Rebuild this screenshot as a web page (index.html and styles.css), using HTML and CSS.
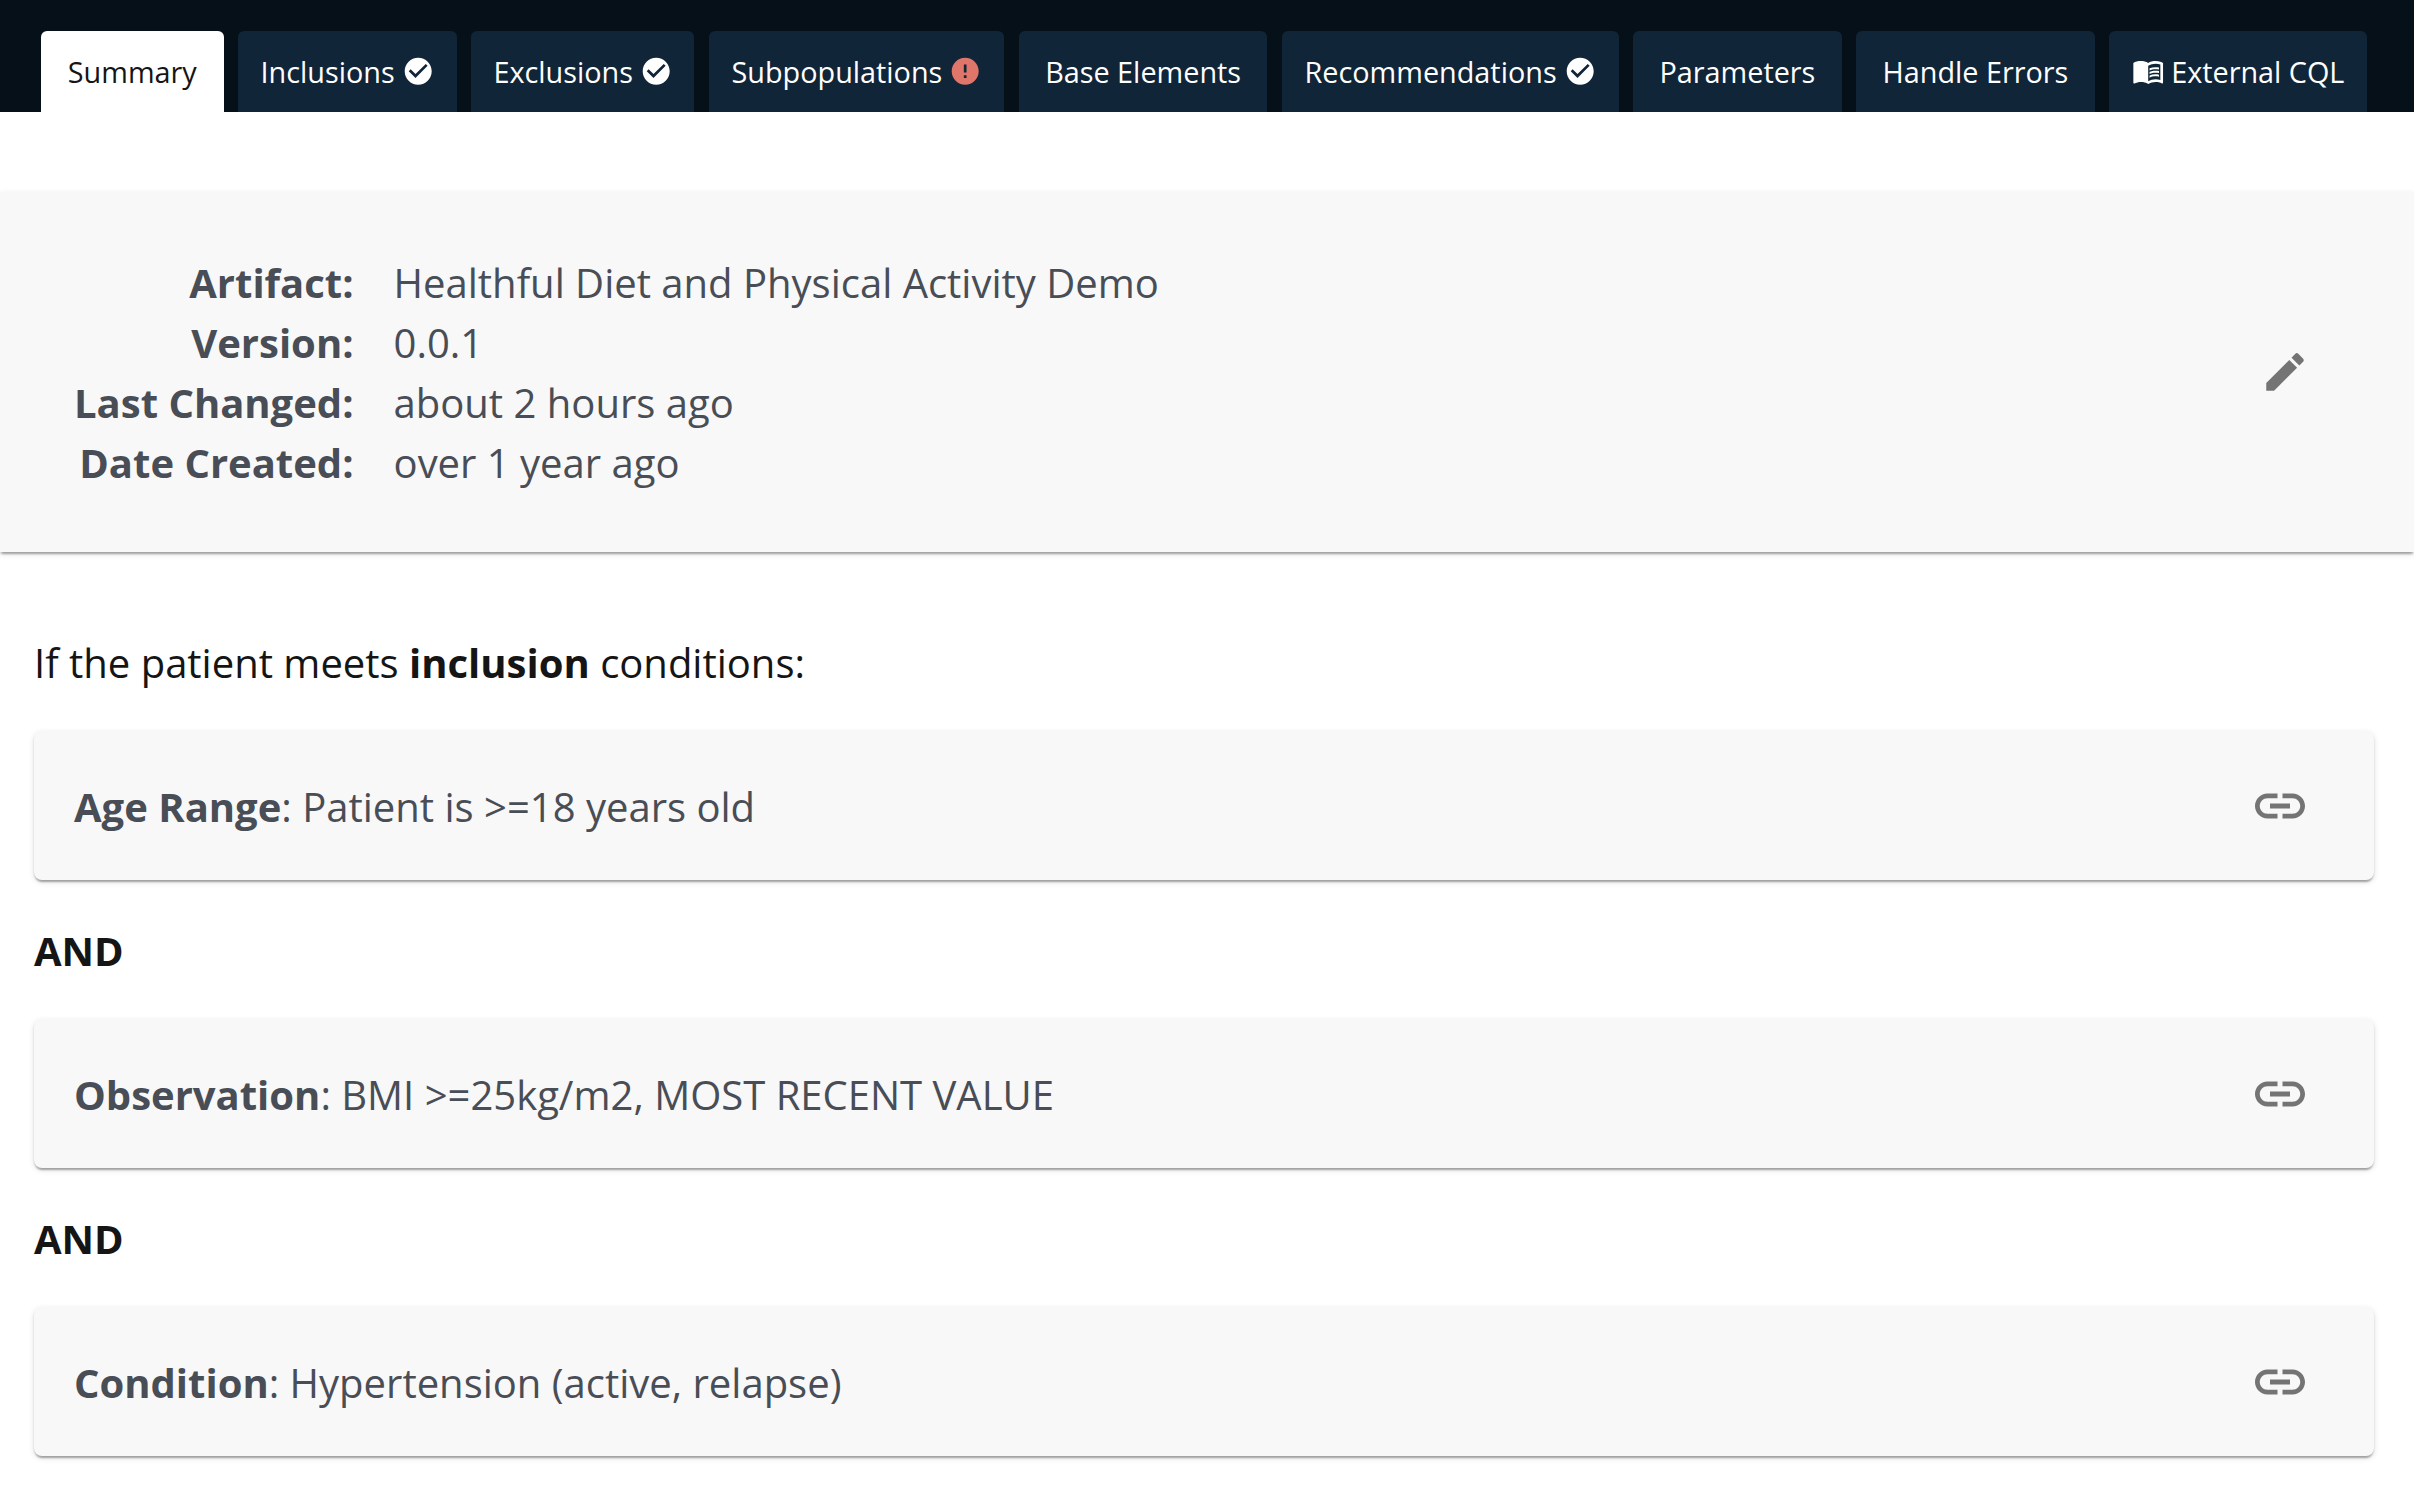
FILE: index.html
```html
<!DOCTYPE html>
<html lang="en">
<head>
<meta charset="utf-8">
<title>Artifact Summary</title>
<link rel="stylesheet" href="styles.css">
</head>
<body>
<svg class="sprite" aria-hidden="true">
  <symbol id="check" viewBox="0 0 24 24"><path d="M12 2C6.48 2 2 6.48 2 12s4.48 10 10 10 10-4.48 10-10S17.52 2 12 2zm-2 15l-5-5 1.41-1.41L10 14.17l7.59-7.59L19 8l-9 9z"/></symbol>
  <symbol id="error" viewBox="0 0 24 24"><path d="M12 2C6.48 2 2 6.48 2 12s4.48 10 10 10 10-4.48 10-10S17.52 2 12 2zm1 15h-2v-2h2v2zm0-4h-2V7h2v6z"/></symbol>
  <symbol id="book" viewBox="0 0 24 24"><path d="M21 5c-1.11-.35-2.33-.5-3.5-.5-1.95 0-4.05.4-5.5 1.5-1.45-1.1-3.55-1.5-5.5-1.5S2.45 4.9 1 6v14.65c0 .25.25.5.5.5.1 0 .15-.05.25-.05C3.1 20.45 5.05 20 6.5 20c1.95 0 4.05.4 5.5 1.5 1.35-.85 3.8-1.5 5.5-1.5 1.65 0 3.35.3 4.75 1.05.1.05.15.05.25.05.25 0 .5-.25.5-.5V6c-.6-.45-1.25-.75-2-1zm0 13.5c-1.1-.35-2.3-.5-3.5-.5-1.7 0-4.15.65-5.5 1.5V8c1.35-.85 3.8-1.5 5.5-1.5 1.2 0 2.4.15 3.5.5v11.5z"/><path d="M17.5 10.5c.88 0 1.73.09 2.5.26V9.24c-.79-.15-1.64-.24-2.5-.24-1.7 0-3.24.29-4.5.83v1.66c1.13-.64 2.7-.99 4.5-.99zM13 12.49v1.66c1.13-.64 2.7-.99 4.5-.99.88 0 1.73.09 2.5.26V11.9c-.79-.15-1.64-.24-2.5-.24-1.7 0-3.24.3-4.5.83zM17.5 14.33c-1.7 0-3.24.29-4.5.83v1.66c1.13-.64 2.7-.99 4.5-.99.88 0 1.73.09 2.5.26v-1.52c-.79-.16-1.64-.24-2.5-.24z"/></symbol>
  <symbol id="edit" viewBox="0 0 24 24"><path d="M3 17.25V21h3.75L17.81 9.94l-3.75-3.75L3 17.25zM20.71 7.04c.39-.39.39-1.02 0-1.41l-2.34-2.34a.9959.9959 0 0 0-1.41 0l-1.83 1.83 3.75 3.75 1.83-1.83z"/></symbol>
  <symbol id="link" viewBox="0 0 24 24"><path d="M3.9 12c0-1.71 1.39-3.1 3.1-3.1h4V7H7c-2.76 0-5 2.24-5 5s2.24 5 5 5h4v-1.9H7c-1.71 0-3.1-1.39-3.1-3.1zM8 13h8v-2H8v2zm9-6h-4v1.9h4c1.71 0 3.1 1.39 3.1 3.1s-1.39 3.1-3.1 3.1h-4V17h4c2.76 0 5-2.24 5-5s-2.24-5-5-5z"/></symbol>
</svg>
<nav class="tabs">
  <a class="tab w1 active">Summary</a>
  <a class="tab w2">Inclusions<svg class="status"><use href="#check"/></svg></a>
  <a class="tab w3">Exclusions<svg class="status"><use href="#check"/></svg></a>
  <a class="tab w4">Subpopulations<svg class="status alert"><use href="#error"/></svg></a>
  <a class="tab w5">Base Elements</a>
  <a class="tab w6">Recommendations<svg class="status"><use href="#check"/></svg></a>
  <a class="tab w7">Parameters</a>
  <a class="tab w8">Handle Errors</a>
  <a class="tab w9"><svg class="lead"><use href="#book"/></svg>External CQL</a>
</nav>
<header class="details">
  <dl class="meta">
    <dt>Artifact:</dt><dd>Healthful Diet and Physical Activity Demo</dd>
    <dt>Version:</dt><dd>0.0.1</dd>
    <dt>Last Changed:</dt><dd>about 2 hours ago</dd>
    <dt>Date Created:</dt><dd>over 1 year ago</dd>
  </dl>
  <svg class="edit"><use href="#edit"/></svg>
</header>
<main class="summary">
  <p class="line">If the patient meets <b>inclusion</b> conditions:</p>
  <section class="card"><p><b>Age Range</b>: Patient is &gt;=18 years old</p><svg class="link"><use href="#link"/></svg></section>
  <p class="line"><b>AND</b></p>
  <section class="card"><p><b>Observation</b>: BMI &gt;=25kg/m2, MOST RECENT VALUE</p><svg class="link"><use href="#link"/></svg></section>
  <p class="line"><b>AND</b></p>
  <section class="card"><p><b>Condition</b>: Hypertension (active, relapse)</p><svg class="link"><use href="#link"/></svg></section>
</main>
</body>
</html>
```
FILE: styles.css
```css
* { box-sizing: border-box; }
body {
  margin: 0;
  background: #fff;
  color: #151515;
  font: 40px/60px "Open Sans", sans-serif;
}
p, dl, dd { margin: 0; }
b, dt { font-weight: 700; }
svg { display: block; flex: none; fill: currentColor; }
.sprite { display: none; }

.tabs {
  display: flex;
  align-items: flex-end;
  gap: 14.4px;
  height: 112px;
  padding-left: 41px;
  background: #061018;
}
.tab {
  display: flex;
  align-items: center;
  justify-content: center;
  height: 81px;
  border-radius: 6px 6px 0 0;
  background: #112538;
  color: #fff;
  font-size: 28.8px;
  line-height: 40px;
  white-space: nowrap;
}
.tab.active { background: #fff; color: #151515; }
.w1 { width: 182.5px; }
.w2 { width: 218.9px; }
.w3 { width: 223.3px; }
.w4 { width: 295.5px; }
.w5 { width: 248.7px; }
.w6 { width: 336.9px; }
.w7 { width: 208.6px; }
.w8 { width: 238.6px; }
.w9 { width: 258px; }
.status { width: 32.4px; height: 32.4px; margin-left: 7px; }
.alert { color: #e0756a; }
.lead { width: 32.4px; height: 32.4px; margin-right: 7px; }

.details, .card {
  display: flex;
  align-items: center;
  justify-content: space-between;
  background: #f8f8f8;
  color: #484d56;
  box-shadow: 0 4px 2px -2px rgba(0, 0, 0, .2), 0 2px 2px rgba(0, 0, 0, .14), 0 2px 6px rgba(0, 0, 0, .12);
}
.details {
  height: 360px;
  margin-top: 80px;
  padding: 0 104px 0 74px;
}
.meta {
  display: grid;
  grid-template-columns: auto auto;
  column-gap: 40px;
  padding-top: 2px;
}
.meta dt { text-align: right; }
.edit { width: 50px; height: 50px; color: #747474; }

.summary { padding: 76px 40px 38px 34px; }
.line { height: 139px; padding-top: 41px; }
.line:first-child { height: 103px; padding-top: 5px; }
.card {
  height: 149px;
  padding: 0 64px 0 40px;
  border-radius: 8px;
}
.card p { padding-top: 2px; }
.link { width: 60px; height: 60px; color: #747474; }
```
